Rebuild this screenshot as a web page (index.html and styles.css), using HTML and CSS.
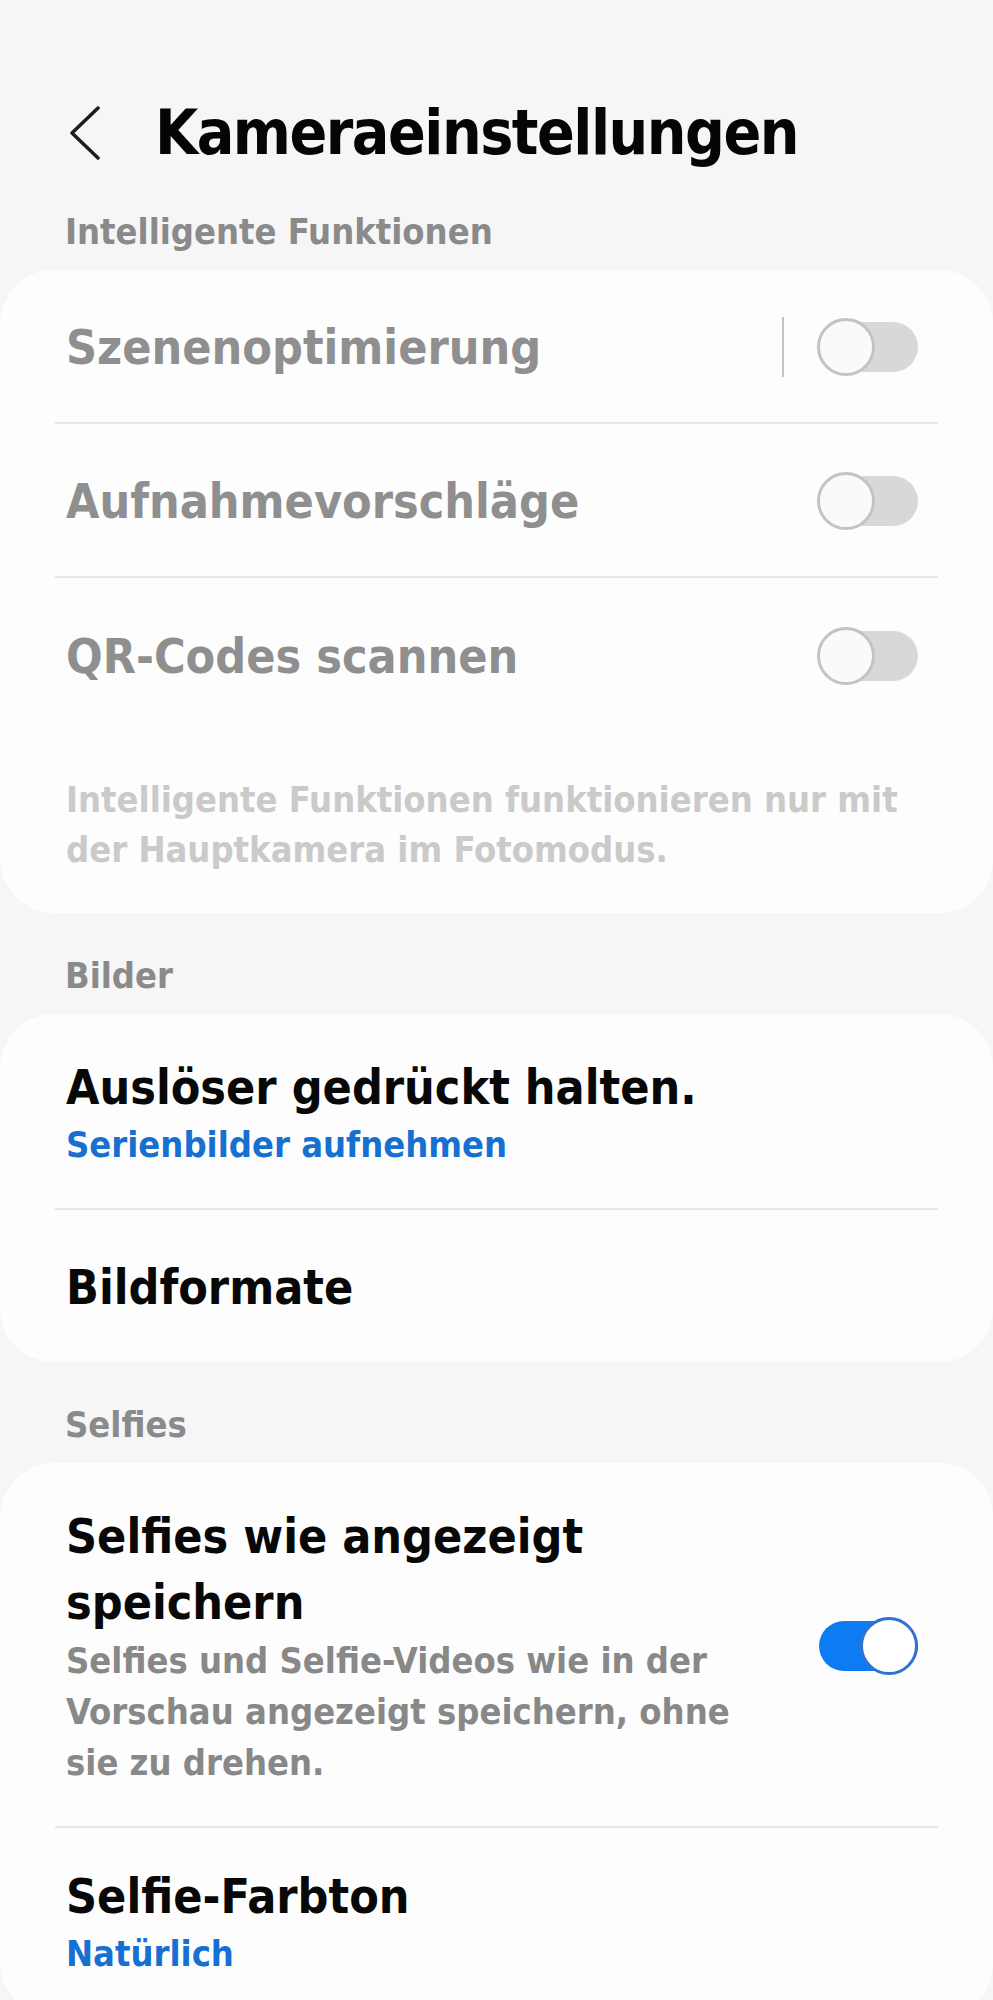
FILE: index.html
```html
<!DOCTYPE html>
<html lang="de">
<head>
<meta charset="utf-8">
<title>Kameraeinstellungen</title>
<link rel="stylesheet" href="styles.css">
</head>
<body>
<header class="appbar">
  <svg class="back" width="34" height="54" viewBox="0 0 34 54" aria-hidden="true">
    <polyline points="30,2 4,27 30,52" fill="none" stroke="#1c1c1c" stroke-width="3.5" stroke-linecap="round" stroke-linejoin="round"/>
  </svg>
  <h1 class="title">Kameraeinstellungen</h1>
</header>

<h2 class="section-title">Intelligente Funktionen</h2>
<section class="card">
  <div class="row sep">
    <div class="text"><div class="label disabled">Szenenoptimierung</div></div>
    <div class="divider"></div>
    <div class="switch"><span class="track"></span><span class="thumb"></span></div>
  </div>
  <div class="row sep">
    <div class="text"><div class="label disabled">Aufnahmevorschläge</div></div>
    <div class="switch"><span class="track"></span><span class="thumb"></span></div>
  </div>
  <div class="row">
    <div class="text"><div class="label disabled">QR-Codes scannen</div></div>
    <div class="switch"><span class="track"></span><span class="thumb"></span></div>
  </div>
  <p class="footnote">Intelligente Funktionen funktionieren nur mit der Hauptkamera im Fotomodus.</p>
</section>

<h2 class="section-title">Bilder</h2>
<section class="card">
  <div class="row sep">
    <div class="text">
      <div class="label">Auslöser gedrückt halten.</div>
      <div class="value">Serienbilder aufnehmen</div>
    </div>
  </div>
  <div class="row short">
    <div class="text"><div class="label">Bildformate</div></div>
  </div>
</section>

<h2 class="section-title">Selfies</h2>
<section class="card">
  <div class="row sep">
    <div class="text">
      <div class="label">Selfies wie angezeigt speichern</div>
      <div class="desc">Selfies und Selfie-Videos wie in der Vorschau angezeigt speichern, ohne sie zu drehen.</div>
    </div>
    <div class="switch on"><span class="track"></span><span class="thumb"></span></div>
  </div>
  <div class="row after-sep">
    <div class="text">
      <div class="label">Selfie-Farbton</div>
      <div class="value">Natürlich</div>
    </div>
  </div>
</section>
</body>
</html>
```

FILE: styles.css
```css
html, body {
  margin: 0;
  padding: 0;
}

body {
  background: #f6f6f6;
  font-family: "DejaVu Sans Condensed", "DejaVu Sans", sans-serif;
  font-stretch: condensed;
  font-weight: bold;
  color: #0a0a0a;
  width: 993px;
  height: 2000px;
  overflow: hidden;
}

.appbar {
  display: flex;
  align-items: center;
  height: 80px;
  margin-top: 93px;
  padding-left: 68px;
  gap: 53px;
}

.back {
  flex: none;
  display: block;
}

.title {
  margin: 0;
  font-size: 62px;
  line-height: 80px;
  letter-spacing: -1.5px;
  font-weight: bold;
  color: #050505;
}

.section-title {
  margin: 0;
  padding-left: 65px;
  font-size: 36px;
  line-height: 44px;
  font-weight: bold;
  color: #8a8a8a;
}

.appbar + .section-title {
  margin-top: 37px;
}

.card + .section-title {
  margin-top: 41px;
}

.section-title + .card {
  margin-top: 16px;
}

.card {
  background: #fdfdfd;
  border-radius: 54px;
  padding: 0 55px;
}

.row {
  display: flex;
  align-items: center;
  box-sizing: border-box;
  min-height: 154px;
  padding: 40px 20px 38px 11px;
}

.row.short {
  min-height: 152px;
}

.row.after-sep {
  padding-top: 35px;
}

.row.sep {
  border-bottom: 2px solid #e7e7e7;
}

.text {
  flex: 1;
  min-width: 0;
  margin-right: 66px;
}

.label {
  font-size: 48px;
  line-height: 66px;
  color: #080808;
}

.label.disabled {
  color: #8f8f8f;
}

.value {
  font-size: 36px;
  line-height: 50px;
  color: #1670d2;
}

.desc {
  font-size: 36px;
  line-height: 51px;
  color: #888888;
}

.footnote {
  margin: 0;
  padding: 43px 20px 38px 11px;
  font-size: 36px;
  line-height: 50px;
  color: #cacaca;
}

.divider {
  flex: none;
  width: 2px;
  height: 60px;
  background: #c4c4c4;
  margin-left: -66px;
  margin-right: 33px;
}

.switch {
  flex: none;
  position: relative;
  width: 101px;
  height: 60px;
}

.track {
  position: absolute;
  left: 2px;
  right: 0;
  top: 5px;
  bottom: 5px;
  border-radius: 25px;
  background: #d8d8d8;
}

.thumb {
  position: absolute;
  left: 0;
  top: 1px;
  box-sizing: border-box;
  width: 58px;
  height: 58px;
  border-radius: 50%;
  background: #fafafa;
  border: 3px solid #c3c3c3;
}

.switch.on .track {
  background: #0d7cf2;
}

.switch.on .thumb {
  left: auto;
  right: 0;
  background: #ffffff;
  border-color: #2f73cf;
}
```
